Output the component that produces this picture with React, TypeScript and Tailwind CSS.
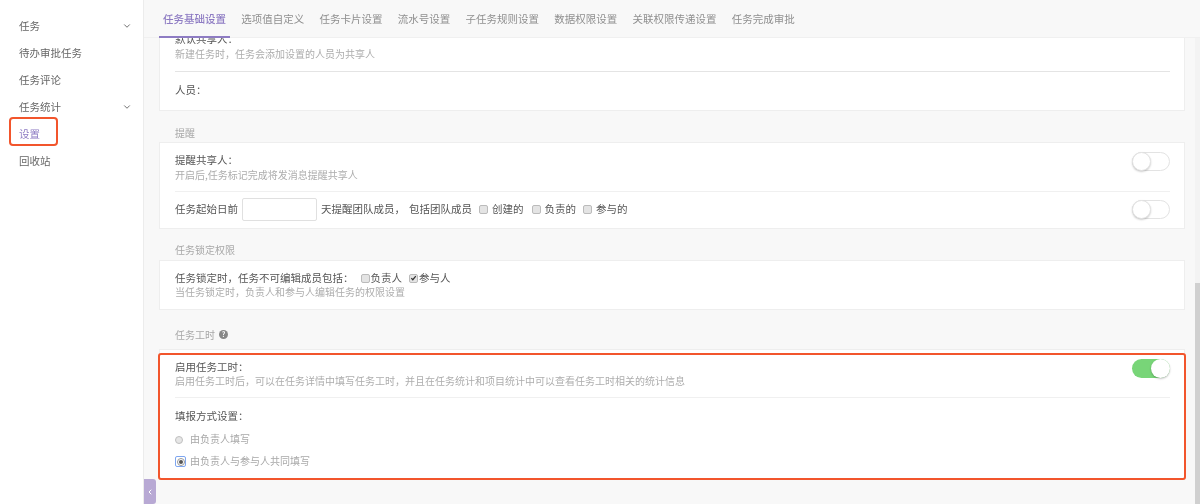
import * as React from "react";
import { ChevronDown, ChevronLeft } from "lucide-react";

const tabs = ["任务基础设置", "选项值自定义", "任务卡片设置", "流水号设置", "子任务规则设置", "数据权限设置", "关联权限传递设置", "任务完成审批"];

const Toggle = ({ on }: { on?: boolean }) => (
  <div className={on ? "relative h-[19px] w-[38px] rounded-full bg-[#78d578]" : "relative h-[19px] w-[38px] rounded-full border border-[#e3e3e3] bg-white"}>
    <div
      className={
        on
          ? "absolute right-0 top-0 h-[19px] w-[19px] rounded-full bg-white shadow-[0_1px_2px_rgba(0,0,0,0.25)]"
          : "absolute -left-px -top-px h-[19px] w-[19px] rounded-full border border-[#e3e3e3] bg-white shadow-[0_1px_2px_rgba(0,0,0,0.2)]"
      }
    />
  </div>
);

const Check = ({ checked }: { checked?: boolean }) => (
  <span className="mt-px flex h-[9px] w-[9px] items-center justify-center rounded-[2px] border border-[#bbbbbb] bg-[#e4e4e4]">
    {checked && (
      <svg viewBox="0 0 8 8" className="h-[8px] w-[8px]">
        <path d="M1.5 4.2 L3.2 6 L6.6 1.8" fill="none" stroke="#333" strokeWidth="1.4" />
      </svg>
    )}
  </span>
);

export default function App() {
  return (
    <div className="relative flex h-[504px] w-[1200px] overflow-hidden bg-[#f8f8f8] text-[10.5px] text-[#555] blur-[0.35px] [font-family:'Noto_Sans_CJK_SC',sans-serif]">
      <aside className="flex w-[144px] shrink-0 flex-col border-r border-[#ececec] bg-white pt-[12px] leading-[27px] text-[#666]">
        <div className="flex items-center justify-between pl-[19px] pr-[11px]">
          任务 <ChevronDown size={10} className="text-[#555]" />
        </div>
        <div className="pl-[19px]">待办审批任务</div>
        <div className="pl-[19px]">任务评论</div>
        <div className="flex items-center justify-between pl-[19px] pr-[11px]">
          任务统计 <ChevronDown size={10} className="text-[#555]" />
        </div>
        <div className="pl-[19px] text-[#8e7cc3]">设置</div>
        <div className="pl-[19px]">回收站</div>
      </aside>

      <main className="flex min-w-0 flex-1 flex-col">
        <nav className="z-10 flex h-[38px] shrink-0 gap-[7.25px] border-b border-[#f0f0f0] bg-[#f8f8f8] pl-[15px] text-[#8f8f8f]">
          {tabs.map((t, i) => (
            <div
              key={t}
              className={
                i === 0
                  ? "-mb-px border-b-2 border-[#8e7cc3] px-[4px] pt-[11px] font-medium text-[#8e7cc3]"
                  : "px-[4px] pt-[11px]"
              }
            >
              {t}
            </div>
          ))}
        </nav>

        <div className="-mt-[9px] flex flex-col pl-[15px] pr-[15px]">
          <section className="h-[82px] border border-[#eeeeee] bg-white pl-[15px] pr-[14px] pt-px">
            <div className="h-[15px] leading-[15px]">{"默认共享人\uFF1A"}</div>
            <div className="text-[10px] leading-[15px] text-[#adadad]">{"新建任务时\uFF0C任务会添加设置的人员为共享人"}</div>
            <div className="mt-[10px] border-t border-[#e4e4e4] pt-[10px] leading-[16px]">{"人员\uFF1A"}</div>
          </section>

          <div className="h-[31px] pl-[16px] pt-[14px] text-[10px] leading-[16px] text-[#a8a8a8]">提醒</div>
          <section className="h-[87px] border border-[#eeeeee] bg-white pl-[15px] pr-[14px]">
            <div className="flex h-[49px] items-start justify-between border-b border-[#f0f0f0] pt-[9px]">
              <div>
                <div className="leading-[15px]">{"提醒共享人\uFF1A"}</div>
                <div className="text-[10px] leading-[15px] text-[#adadad]">开启后,任务标记完成将发消息提醒共享人</div>
              </div>
              <Toggle />
            </div>
            <div className="flex h-[34px] items-center justify-between">
              <div className="flex items-center">
                <span>任务起始日前</span>
                <span className="mx-[4px] h-[23px] w-[75px] rounded-[2px] border border-[#e0e0e0] bg-white" />
                <span>{"天提醒团队成员\uFF0C"}</span>
                <span className="ml-[4px]">包括团队成员</span>
                <span className="ml-[7px] flex items-center gap-[4px]"><Check /><span>创建的</span></span>
                <span className="ml-[8px] flex items-center gap-[4px]"><Check /><span>负责的</span></span>
                <span className="ml-[7px] flex items-center gap-[4px]"><Check /><span>参与的</span></span>
              </div>
              <Toggle />
            </div>
          </section>

          <div className="h-[31px] pl-[16px] pt-[13px] text-[10px] leading-[16px] text-[#a8a8a8]">任务锁定权限</div>
          <section className="h-[50px] border border-[#eeeeee] bg-white pl-[15px] pr-[14px] pt-[9px]">
            <div className="flex items-center leading-[15px]">
              <span>{"任务锁定时\uFF0C任务不可编辑成员包括\uFF1A"}</span>
              <span className="ml-[7px] flex items-center gap-[1px]"><Check /><span>负责人</span></span>
              <span className="ml-[7px] flex items-center gap-[1px]"><Check checked /><span>参与人</span></span>
            </div>
            <div className="text-[10px] leading-[14px] text-[#adadad]">{"当任务锁定时\uFF0C负责人和参与人编辑任务的权限设置"}</div>
          </section>

          <div className="flex h-[39px] items-center gap-[4px] pl-[16px] pt-[10px] text-[10px] text-[#a8a8a8]">
            任务工时
            <span className="flex h-[9px] w-[9px] items-center justify-center rounded-full bg-[#888] text-[7px] font-bold leading-none text-white">?</span>
          </div>
          <section className="h-[131px] border border-[#eeeeee] bg-white pl-[15px] pr-[14px] pt-[9px]">
            <div className="flex h-[39px] items-start justify-between border-b border-[#f0f0f0]">
              <div>
                <div className="leading-[15px]">{"启用任务工时\uFF1A"}</div>
                <div className="text-[10px] leading-[14px] text-[#adadad]">{"启用任务工时后\uFF0C可以在任务详情中填写任务工时\uFF0C并且在任务统计和项目统计中可以查看任务工时相关的统计信息"}</div>
              </div>
              <Toggle on />
            </div>
            <div className="mt-[10px] leading-[16px]">{"填报方式设置\uFF1A"}</div>
            <div className="mt-[3px] flex h-[22px] items-center gap-[7px] text-[10px] text-[#a8a8a8]">
              <span className="mt-[3px] h-[8px] w-[8px] rounded-full border border-[#c0c0c0] bg-[#e6e6e6]" />
              由负责人填写
            </div>
            <div className="flex h-[22px] items-center gap-[4px] text-[10px] text-[#a8a8a8]">
              <span className="mt-[3px] flex h-[11px] w-[11px] items-center justify-center rounded-[2px] border border-[#7ea6f0]">
                <span className="flex h-[8px] w-[8px] items-center justify-center rounded-full border border-[#999] bg-white">
                  <span className="h-[4px] w-[4px] rounded-full bg-[#555]" />
                </span>
              </span>
              由负责人与参与人共同填写
            </div>
          </section>
        </div>
      </main>

      {/* scrollbar */}
      <div className="absolute right-0 top-0 h-[504px] w-[5px] bg-[#f3f3f3]">
        <div className="mt-[283px] h-[221px] w-[5px] bg-[#d0d0d0]" />
      </div>

      {/* collapse handle */}
      <div className="absolute left-[144px] top-[479px] flex h-[25px] w-[12px] items-center justify-center rounded-r-[3px] bg-[#b8a9d4]">
        <ChevronLeft size={8} className="text-white" strokeWidth={3} />
      </div>

      {/* annotation boxes */}
      <div className="absolute left-[9px] top-[117px] h-[29px] w-[49px] rounded-[4px] border-2 border-[#f2552c]" />
      <div className="absolute left-[158px] top-[353px] h-[127px] w-[1028px] rounded-[3px] border-2 border-[#f2552c]" />
    </div>
  );
}
